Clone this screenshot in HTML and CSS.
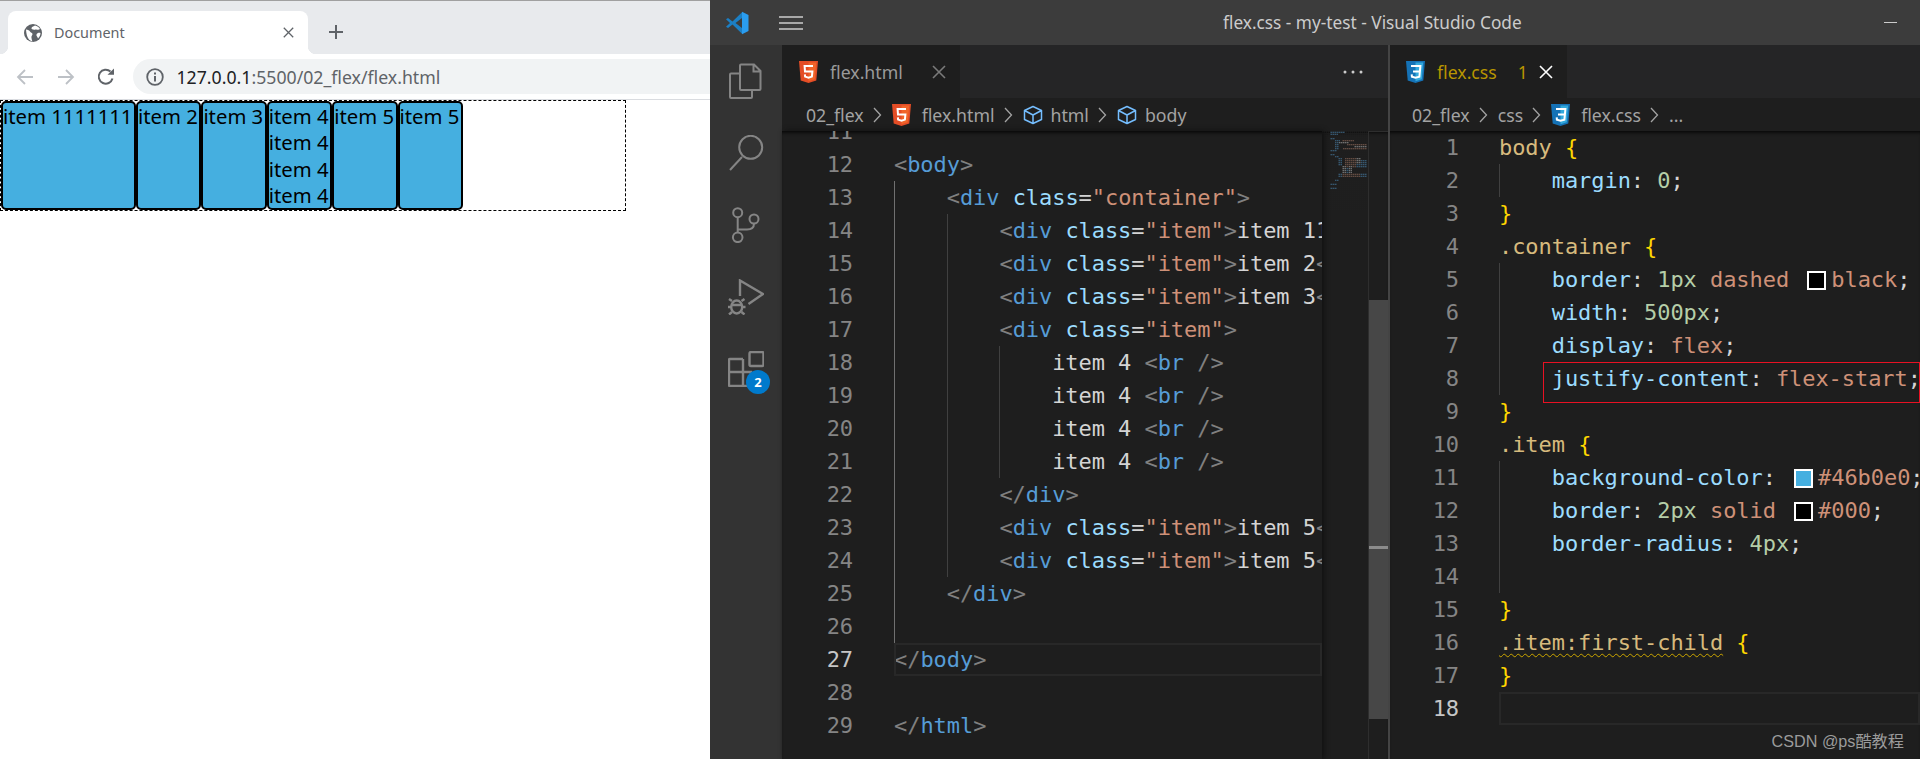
FILE: index.html
```html
<!DOCTYPE html>
<html lang="en">
<head>
    <meta charset="UTF-8">
    <meta name="viewport" content="width=device-width, initial-scale=1.0">
    <title>flex.css - my-test - Visual Studio Code</title>
    <link rel="stylesheet" href="styles.css">
</head>
<body>
    <svg class="defs" aria-hidden="true">
        <symbol id="html5" viewBox="0 0 19 22">
            <path d="M0 0h19l-1.7 19.5L9.5 22l-7.8-2.5z" fill="#e44d26"/>
            <path d="M9.5 1.6h7.7l-1.4 16.7-6.3 2z" fill="#f16529"/>
            <path d="M14 5H5.6l.4 5.4h7.4l-.5 5.2-3.4 1-3.4-1-.2-2.2" fill="none" stroke="#fff" stroke-width="2"/>
        </symbol>
        <symbol id="css3" viewBox="0 0 19 22">
            <path d="M0 0h19l-1.7 19.5L9.5 22l-7.8-2.5z" fill="#1572b6"/>
            <path d="M9.5 1.6h7.7l-1.4 16.7-6.3 2z" fill="#33a9dc"/>
            <path d="M5 5h9.4l-.5 5.4H7m6.9 0-.5 5.2-3.9 1-3.6-1-.2-2.2" fill="none" stroke="#fff" stroke-width="2"/>
        </symbol>
        <symbol id="cube" viewBox="0 0 20 20">
            <path d="M10 1.5l8.5 4v9l-8.5 4-8.5-4v-9zM1.5 5.5L10 10l8.500-4.500M10 10v8.500" fill="none" stroke="#75beff" stroke-width="1.500" stroke-linejoin="round"/>
        </symbol>
        <symbol id="chev" viewBox="0 0 9 16">
            <path d="M1 1l6.500 7L1 15" fill="none" stroke="currentColor" stroke-width="1.300"/>
        </symbol>
        <symbol id="cross" viewBox="0 0 14 14">
            <path d="M1 1l12 12M13 1L1 13" fill="none" stroke="currentColor" stroke-width="1.600"/>
        </symbol>
    </svg>

    <div class="browser">
        <div class="tabstrip">
            <div class="chrome-tab">
                <svg class="favicon" viewBox="0 0 18 18">
                    <circle cx="9" cy="9" r="9" fill="#5f6368"/>
                    <path d="M2 5.500c2 .5 3.500.5 4 2 .5 1.500 2.500 1 2.500 2.500S7 12 7.500 14c.3 1.500.5 2.500 1 3.500-3-1-6-3-6.500-12zM11 1.500c-1 1-3 1-3.500 2.500S10 6 11.500 5.500 14 6.500 16 5c-1-2-3-3-5-3.500zM16.500 9c-1.500-.5-3.500 0-4 1.500s1 2 1.500 4c1.500-1.500 2.500-3.500 2.500-5.500z" fill="#fff"/>
                </svg>
                <span class="chrome-tab-title">Document</span>
                <svg class="chrome-close"><use href="#cross"/></svg>
            </div>
            <svg class="chrome-plus" viewBox="0 0 16 16"><path d="M8 1v14M1 8h14" stroke="#5f6368" stroke-width="2"/></svg>
        </div>
        <div class="toolbar">
            <div class="nav-btn">
                <svg viewBox="0 0 18 18"><path d="M17 9H2M9 2L2 9l7 7" fill="none" stroke="#bdc1c6" stroke-width="1.800"/></svg>
            </div>
            <div class="nav-btn">
                <svg viewBox="0 0 18 18"><path d="M1 9h15M9 2l7 7-7 7" fill="none" stroke="#bdc1c6" stroke-width="1.800"/></svg>
            </div>
            <div class="nav-btn">
                <svg viewBox="0 0 18 18"><path d="M15.500 10.500A7 7 0 1 1 13.500 3.500" fill="none" stroke="#5f6368" stroke-width="2"/><path d="M10.500 6.800H17V.5z" fill="#5f6368"/></svg>
            </div>
            <div class="omnibox">
                <svg class="info" viewBox="0 0 18 18">
                    <circle cx="9" cy="9" r="7.800" fill="none" stroke="#5f6368" stroke-width="1.800"/>
                    <path d="M8 8h2v5.500H8zM8 4.500h2v2H8z" fill="#5f6368"/>
                </svg>
                <span class="url"><b>127.0.0.1</b>:5500/02_flex/flex.html</span>
            </div>
        </div>
        <div class="container">
            <div class="item item-first">item 1111111</div>
            <div class="item">item 2</div>
            <div class="item">item 3</div>
            <div class="item">item 4<br>item 4<br>item 4<br>item 4</div>
            <div class="item">item 5</div>
            <div class="item">item 5</div>
        </div>
    </div>

    <div class="vscode">
        <div class="titlebar">
            <svg class="logo" viewBox="0 0 24 24">
                <path d="M1 8.300L3 7l4.500 3.500L17 1.300V7l-6.500 5 6.500 5v5.700l-9.500-9.200L3 17l-2-1.300L5 12z" fill="#1c7fc4"/>
                <path d="M17 .8L23.500 4v16L17 23.200z" fill="#2a9df0"/>
            </svg>
            <svg class="hamburger" viewBox="0 0 24 14"><path d="M0 1h24M0 7h24M0 13h24" stroke="#ccc" stroke-width="1.300"/></svg>
            <div class="window-title">flex.css - my-test - Visual Studio Code</div>
            <div class="minimize"></div>
        </div>
        <div class="workbench">
            <div class="activity">
                <div class="activity-item">
                    <svg viewBox="0 0 36 36"><path d="M13 1.500h13l6.500 6.500v18a1 1 0 0 1-1 1H13a1 1 0 0 1-1-1v-23.500a1 1 0 0 1 1-1zM25.500 1.500V8.500h7M12 10.500H3a1 1 0 0 0-1 1V34a1 1 0 0 0 1 1h20a1 1 0 0 0 1-1v-7"/></svg>
                </div>
                <div class="activity-item">
                    <svg viewBox="0 0 36 36"><circle cx="22.700" cy="12.300" r="11.500"/><path d="M14 22L2 35"/></svg>
                </div>
                <div class="activity-item">
                    <svg viewBox="0 0 36 36"><circle cx="9.700" cy="5.700" r="4.500"/><circle cx="9.700" cy="30.300" r="4.800"/><circle cx="26" cy="12" r="4.500"/><path d="M9.700 10.200v15.300M26 16.500c0 4-3 6-7 6H9.700"/></svg>
                </div>
                <div class="activity-item">
                    <svg class="heavy" viewBox="0 0 36 36"><path d="M12 17V1.500L35 15 20.500 25"/><ellipse cx="8.700" cy="28" rx="5.500" ry="6.500"/><path d="M4 22l-3-2M13.500 22l3-2M3 28H0M14.500 28h3M4 33l-3 2.500M13.500 33l3 2.500M4 26h9.500"/></svg>
                </div>
                <div class="activity-item">
                    <svg class="heavy" viewBox="0 0 36 36"><rect x="21.500" y="1" width="14" height="14" rx="1.500"/><path d="M15 8H2a1 1 0 0 0-1 1v25a1 1 0 0 0 1 1h21v-14H1M15 8v27"/></svg>
                    <span class="badge">2</span>
                </div>
            </div>

            <div class="group group-left">
                <div class="tabs">
                    <div class="tab">
                        <svg class="file-icon"><use href="#html5"/></svg>
                        <span class="tab-name">flex.html</span>
                        <svg class="tab-close"><use href="#cross"/></svg>
                    </div>
                    <svg class="more" viewBox="0 0 20 4"><circle cx="2" cy="2" r="1.500"/><circle cx="10" cy="2" r="1.500"/><circle cx="18" cy="2" r="1.500"/></svg>
                </div>
                <div class="crumbs">
                    <span>02_flex</span>
                    <svg class="chev"><use href="#chev"/></svg>
                    <svg class="file-icon"><use href="#html5"/></svg>
                    <span class="crumb-file">flex.html</span>
                    <svg class="chev"><use href="#chev"/></svg>
                    <svg class="cube"><use href="#cube"/></svg>
                    <span>html</span>
                    <svg class="chev"><use href="#chev"/></svg>
                    <svg class="cube"><use href="#cube"/></svg>
                    <span>body</span>
                </div>
                <div class="editor">
                    <div class="lines lines-scrolled">
                        <div class="line"><span class="num">11</span><div class="txt"></div></div>
                        <div class="line"><span class="num">12</span><div class="txt"><i>&lt;</i><em>body</em><i>&gt;</i></div></div>
                        <div class="line"><span class="num">13</span><div class="txt"><u class="on"></u><i>&lt;</i><em>div</em> <var>class</var>=<s>"container"</s><i>&gt;</i></div></div>
                        <div class="line"><span class="num">14</span><div class="txt"><u class="on"></u><u></u><i>&lt;</i><em>div</em> <var>class</var>=<s>"item"</s><i>&gt;</i>item 1111111<i>&lt;/</i><em>div</em><i>&gt;</i></div></div>
                        <div class="line"><span class="num">15</span><div class="txt"><u class="on"></u><u></u><i>&lt;</i><em>div</em> <var>class</var>=<s>"item"</s><i>&gt;</i>item 2<i>&lt;/</i><em>div</em><i>&gt;</i></div></div>
                        <div class="line"><span class="num">16</span><div class="txt"><u class="on"></u><u></u><i>&lt;</i><em>div</em> <var>class</var>=<s>"item"</s><i>&gt;</i>item 3<i>&lt;/</i><em>div</em><i>&gt;</i></div></div>
                        <div class="line"><span class="num">17</span><div class="txt"><u class="on"></u><u></u><i>&lt;</i><em>div</em> <var>class</var>=<s>"item"</s><i>&gt;</i></div></div>
                        <div class="line"><span class="num">18</span><div class="txt"><u class="on"></u><u></u><u></u>item 4 <i>&lt;</i><em>br</em> <i>/&gt;</i></div></div>
                        <div class="line"><span class="num">19</span><div class="txt"><u class="on"></u><u></u><u></u>item 4 <i>&lt;</i><em>br</em> <i>/&gt;</i></div></div>
                        <div class="line"><span class="num">20</span><div class="txt"><u class="on"></u><u></u><u></u>item 4 <i>&lt;</i><em>br</em> <i>/&gt;</i></div></div>
                        <div class="line"><span class="num">21</span><div class="txt"><u class="on"></u><u></u><u></u>item 4 <i>&lt;</i><em>br</em> <i>/&gt;</i></div></div>
                        <div class="line"><span class="num">22</span><div class="txt"><u class="on"></u><u></u><i>&lt;/</i><em>div</em><i>&gt;</i></div></div>
                        <div class="line"><span class="num">23</span><div class="txt"><u class="on"></u><u></u><i>&lt;</i><em>div</em> <var>class</var>=<s>"item"</s><i>&gt;</i>item 5<i>&lt;/</i><em>div</em><i>&gt;</i></div></div>
                        <div class="line"><span class="num">24</span><div class="txt"><u class="on"></u><u></u><i>&lt;</i><em>div</em> <var>class</var>=<s>"item"</s><i>&gt;</i>item 5<i>&lt;/</i><em>div</em><i>&gt;</i></div></div>
                        <div class="line"><span class="num">25</span><div class="txt"><u class="on"></u><i>&lt;/</i><em>div</em><i>&gt;</i></div></div>
                        <div class="line"><span class="num">26</span><div class="txt"><u class="on"></u></div></div>
                        <div class="line current"><span class="num">27</span><div class="txt"><i>&lt;/</i><em>body</em><i>&gt;</i></div></div>
                        <div class="line"><span class="num">28</span><div class="txt"></div></div>
                        <div class="line"><span class="num">29</span><div class="txt"><i>&lt;/</i><em>html</em><i>&gt;</i></div></div>
                    </div>
                    <svg class="minimap" viewBox="0 0 46 80">
                        <defs>
                            <pattern id="mini-rows" width="2" height="2" patternUnits="userSpaceOnUse">
                                <rect width="2" height=".7" fill="#1e1e1e"/>
                                <rect width=".5" height="2" fill="#1e1e1e"/>
                            </pattern>
                        </defs>
                        <g class="mini-code">
                            <g fill="#3f6a8a">
                                <rect x="8" y="0" width="15" height="2"/><rect x="8" y="2" width="8" height="2"/>
                                <rect x="8" y="7" width="5" height="2"/><rect x="13" y="9" width="5" height="2"/>
                                <rect x="13" y="11" width="4" height="8"/><rect x="8" y="19" width="7" height="2"/>
                                <rect x="8" y="23" width="5" height="2"/><rect x="13" y="25" width="4" height="2"/>
                                <rect x="16" y="27" width="4" height="8"/><rect x="24" y="35" width="3" height="7"/>
                                <rect x="16" y="42" width="4" height="4"/><rect x="13" y="48" width="4" height="2"/>
                                <rect x="8" y="52" width="7" height="2"/><rect x="8" y="56" width="7" height="2"/>
                                <rect x="34" y="29" width="11" height="8"/><rect x="38" y="42" width="7" height="4"/>
                            </g>
                            <g fill="#7a5c4e">
                                <rect x="20" y="9" width="12" height="2"/><rect x="25" y="13" width="20" height="2"/>
                                <rect x="21" y="17" width="24" height="2"/><rect x="23" y="27" width="11" height="10"/>
                                <rect x="20" y="42" width="18" height="4"/>
                            </g>
                            <g fill="#8c8c8c">
                                <rect x="17" y="11" width="10" height="2"/><rect x="32" y="15" width="13" height="2"/>
                                <rect x="34" y="27" width="5" height="6"/><rect x="20" y="35" width="4" height="7"/>
                                <rect x="27" y="35" width="3" height="7"/>
                            </g>
                        </g>
                        <rect width="46" height="80" fill="url(#mini-rows)"/>
                    </svg>
                    <div class="scrollbar"><div class="thumb"><span class="tick"></span></div></div>
                </div>
            </div>

            <div class="group group-right">
                <div class="tabs">
                    <div class="tab tab-warn">
                        <svg class="file-icon"><use href="#css3"/></svg>
                        <span class="tab-name">flex.css</span>
                        <span class="tab-count">1</span>
                        <svg class="tab-close"><use href="#cross"/></svg>
                    </div>
                </div>
                <div class="crumbs">
                    <span>02_flex</span>
                    <svg class="chev"><use href="#chev"/></svg>
                    <span>css</span>
                    <svg class="chev"><use href="#chev"/></svg>
                    <svg class="file-icon"><use href="#css3"/></svg>
                    <span class="crumb-file">flex.css</span>
                    <svg class="chev"><use href="#chev"/></svg>
                    <span>...</span>
                </div>
                <div class="editor">
                    <div class="lines">
                        <div class="line"><span class="num">1</span><div class="txt"><b>body</b> <q>{</q></div></div>
                        <div class="line"><span class="num">2</span><div class="txt"><u></u><var>margin</var>: <tt>0</tt>;</div></div>
                        <div class="line"><span class="num">3</span><div class="txt"><q>}</q></div></div>
                        <div class="line"><span class="num">4</span><div class="txt"><b>.container</b> <q>{</q></div></div>
                        <div class="line"><span class="num">5</span><div class="txt"><u></u><var>border</var>: <tt>1px</tt> <s>dashed</s> <span class="swatch swatch-black"></span><s>black</s>;</div></div>
                        <div class="line"><span class="num">6</span><div class="txt"><u></u><var>width</var>: <tt>500px</tt>;</div></div>
                        <div class="line"><span class="num">7</span><div class="txt"><u></u><var>display</var>: <s>flex</s>;</div></div>
                        <div class="line"><span class="num">8</span><div class="txt"><u></u><var>justify-content</var>: <s>flex-start</s>;</div><span class="mark"></span></div>
                        <div class="line"><span class="num">9</span><div class="txt"><q>}</q></div></div>
                        <div class="line"><span class="num">10</span><div class="txt"><b>.item</b> <q>{</q></div></div>
                        <div class="line"><span class="num">11</span><div class="txt"><u></u><var>background-color</var>: <span class="swatch swatch-blue"></span><s>#46b0e0</s>;</div></div>
                        <div class="line"><span class="num">12</span><div class="txt"><u></u><var>border</var>: <tt>2px</tt> <s>solid</s> <span class="swatch swatch-black"></span><s>#000</s>;</div></div>
                        <div class="line"><span class="num">13</span><div class="txt"><u></u><var>border-radius</var>: <tt>4px</tt>;</div></div>
                        <div class="line"><span class="num">14</span><div class="txt"><u></u></div></div>
                        <div class="line"><span class="num">15</span><div class="txt"><q>}</q></div></div>
                        <div class="line"><span class="num">16</span><div class="txt"><b class="squiggle">.item:first-child</b> <q>{</q></div></div>
                        <div class="line"><span class="num">17</span><div class="txt"><q>}</q></div></div>
                        <div class="line current"><span class="num">18</span><div class="txt"></div></div>
                    </div>
                </div>
            </div>
        </div>
        <div class="watermark">CSDN @ps酷教程</div>
    </div>
</body>
</html>
```

FILE: styles.css
```css
* {
    box-sizing: border-box;
}
body {
    display: flex;
    height: 100vh;
    margin: 0;
    overflow: hidden;
    font-family: "Noto Sans", sans-serif;
    background-color: #fff;
}
.defs {
    width: 0;
    height: 0;
    position: absolute;
}

/* browser window */
.browser {
    width: 710px;
    flex-shrink: 0;
}
.tabstrip {
    display: flex;
    align-items: flex-end;
    height: 54px;
    padding-left: 8px;
    background-color: #e8eaed;
    border-top: 1px solid #a0a0a0;
}
.chrome-tab {
    position: relative;
    display: flex;
    align-items: center;
    width: 300px;
    height: 43px;
    padding-left: 16px;
    background-color: #fff;
    border-radius: 8px 8px 0 0;
}
.chrome-tab::before,
.chrome-tab::after {
    content: "";
    position: absolute;
    bottom: 0;
    width: 8px;
    height: 8px;
}
.chrome-tab::before {
    left: -8px;
    background: radial-gradient(circle at 0 0, #e8eaed 8px, #fff 8.5px);
}
.chrome-tab::after {
    right: -8px;
    background: radial-gradient(circle at 100% 0, #e8eaed 8px, #fff 8.5px);
}
.favicon {
    width: 18px;
    height: 18px;
}
.chrome-tab-title {
    margin-left: 12px;
    font-size: 14.400px;
    color: #5f6368;
}
.chrome-close {
    width: 11px;
    height: 11px;
    margin-left: auto;
    margin-right: 14px;
    color: #5f6368;
}
.chrome-plus {
    width: 16px;
    height: 16px;
    margin: 0 0 14px 20px;
}
.toolbar {
    display: flex;
    align-items: center;
    height: 46px;
    padding-left: 5px;
    background-color: #fff;
    border-bottom: 1px solid #dadce0;
}
.nav-btn {
    display: flex;
    justify-content: center;
    width: 40.500px;
}
.nav-btn svg {
    width: 18px;
    height: 18px;
}
.omnibox {
    display: flex;
    align-items: center;
    flex: 1;
    height: 35px;
    margin-left: 6px;
    padding-left: 13px;
    background-color: #f1f3f4;
    border-radius: 18px 0 0 18px;
}
.info {
    width: 18px;
    height: 18px;
}
.url {
    margin-left: 13px;
    font-size: 17.700px;
    color: #5f6368;
    white-space: nowrap;
}
.url b {
    font-weight: 400;
    color: #202124;
}
.container {
    display: flex;
    justify-content: flex-start;
    width: 626px;
    border: 1px dashed #000;
}
.item {
    min-width: 65.400px;
    font-size: 20.300px;
    line-height: 26.250px;
    color: #000;
    background-color: #45afe0;
    border: 2px solid #000;
    border-radius: 5px;
}
.item-first {
    width: 135px;
    white-space: nowrap;
}

/* vs code window */
.vscode {
    position: relative;
    flex: 1;
    display: flex;
    flex-direction: column;
    min-width: 0;
    background-color: #1e1e1e;
}
.titlebar {
    display: flex;
    align-items: center;
    height: 45px;
    flex-shrink: 0;
    padding-left: 15px;
    padding-right: 23px;
    background-color: #3c3c3c;
}
.logo {
    width: 24px;
    height: 24px;
}
.hamburger {
    width: 24px;
    height: 14px;
    margin-left: 30px;
}
.window-title {
    margin-left: 420px;
    font-size: 17.250px;
    color: #ccc;
    white-space: nowrap;
}
.minimize {
    width: 13px;
    height: 1px;
    margin-left: auto;
    background-color: #ccc;
}
.workbench {
    flex: 1;
    display: flex;
    min-height: 0;
}
.activity {
    width: 72px;
    flex-shrink: 0;
    background-color: #333;
}
.activity-item {
    position: relative;
    display: flex;
    align-items: center;
    justify-content: center;
    height: 72px;
}
.activity-item svg {
    width: 36px;
    height: 36px;
    fill: none;
    stroke: #858585;
    stroke-width: 2;
}
.activity-item svg.heavy {
    stroke-width: 2.400;
}
.badge {
    position: absolute;
    top: 37px;
    left: 36px;
    width: 24px;
    height: 24px;
    font-size: 13px;
    font-weight: 700;
    line-height: 24px;
    text-align: center;
    color: #fff;
    background-color: #007acc;
    border-radius: 50%;
}
.group {
    display: flex;
    flex-direction: column;
    min-width: 0;
}
.group-left {
    width: 608px;
    flex-shrink: 0;
    border-right: 2px solid #444;
}
.group-right {
    flex: 1;
}
.tabs {
    display: flex;
    align-items: center;
    height: 53px;
    flex-shrink: 0;
    background-color: #252526;
}
.tab {
    display: flex;
    align-items: center;
    width: 178px;
    height: 100%;
    padding-left: 17px;
    background-color: #1e1e1e;
    color: #9a9a9a;
}
.file-icon {
    width: 19px;
    height: 22px;
    flex-shrink: 0;
}
.tab-name {
    margin-left: 12px;
    font-size: 17.700px;
}
.tab-close {
    width: 14px;
    height: 14px;
    margin-left: auto;
    margin-right: 14px;
    color: #7a7a7a;
}
.more {
    width: 20px;
    height: 4px;
    margin-left: auto;
    margin-right: 25px;
    fill: #ccc;
}
.tab-warn {
    width: 177px;
    color: #b89500;
}
.tab-count {
    margin-left: 21px;
    font-size: 17.400px;
}
.tab-warn .tab-close {
    color: #fff;
}
.crumbs {
    display: flex;
    align-items: center;
    height: 33px;
    flex-shrink: 0;
    padding-left: 24px;
    font-size: 17.700px;
    color: #a3a3a3;
}
.chev {
    width: 9px;
    height: 16px;
    margin: 0 10px 0 9px;
}
.crumb-file {
    margin-left: 11px;
}
.cube {
    width: 20px;
    height: 20px;
    margin: 0 8px 0 0;
}
.editor {
    flex: 1;
    display: flex;
    min-height: 0;
    box-shadow: inset 0 4px 4px -3px #000;
}
.lines {
    flex: 1;
    min-width: 0;
    overflow: hidden;
    font-family: "DejaVu Sans Mono", monospace;
    font-size: 22px;
    letter-spacing: -0.06px;
    line-height: 33px;
    color: #d4d4d4;
}
.lines-scrolled > .line:first-child {
    margin-top: -16.500px;
}
.line {
    position: relative;
    display: flex;
    height: 33px;
}
.num {
    width: 71px;
    flex-shrink: 0;
    text-align: right;
    color: #858585;
}
.txt {
    flex: 1;
    min-width: 0;
    margin-left: 41px;
    white-space: pre;
}
.current .num {
    color: #c6c6c6;
}
.current .txt {
    outline: 2px solid #282828;
    outline-offset: -2px;
}
/* token colours */
.txt i { font-style: normal; color: #808080; }
.txt em { font-style: normal; color: #569cd6; }
.txt var { font-style: normal; color: #9cdcfe; }
.txt s { text-decoration: none; color: #ce9178; }
.txt b { font-weight: 400; color: #d7ba7d; }
.txt q { quotes: none; color: #ffd700; }
.txt tt { font-family: inherit; color: #b5cea8; }
/* one level of indent, with its guide */
.txt u {
    display: inline-block;
    width: 52.720px;
    height: 33px;
    vertical-align: top;
    border-left: 1px solid #404040;
}
.txt u.on {
    border-left-color: #707070;
}
.swatch {
    display: inline-block;
    width: 19px;
    height: 19px;
    margin: 0 5px;
    vertical-align: -3px;
    border: 2px solid #fff;
}
.swatch-black {
    background-color: #000;
}
.swatch-blue {
    background-color: #45afe0;
}
.mark {
    position: absolute;
    top: 0;
    left: 153px;
    right: 0;
    height: 41px;
    border: 1px solid #e81123;
}
.txt .squiggle {
    text-decoration: underline wavy #cca700 1px;
    text-underline-offset: 3px;
}
.minimap {
    width: 46px;
    height: 80px;
    flex-shrink: 0;
}
.mini-code {
    opacity: .75;
}
.group-left .lines {
    box-shadow: 2px 0 5px #111;
    z-index: 1;
}
.scrollbar {
    width: 20px;
    flex-shrink: 0;
    padding-top: 168px;
    border-left: 1px solid #2e2e2e;
    border-top: 1px solid #2e2e2e;
}
.thumb {
    position: relative;
    height: 419px;
    background-color: #474747;
}
.tick {
    position: absolute;
    top: 246px;
    left: 0;
    right: 0;
    height: 3px;
    background-color: #8c8c8c;
}

/* right group offsets */
.group-right .crumbs {
    padding-left: 22px;
}
.group-right .num {
    width: 69px;
}
.group-right .txt {
    margin-left: 40px;
}
.group-right .tab {
    padding-left: 16px;
}
.watermark {
    position: absolute;
    right: 16px;
    bottom: 7px;
    font-family: "Liberation Sans", "Noto Sans CJK SC", sans-serif;
    font-size: 16.200px;
    color: #9b9b9b;
}
```
